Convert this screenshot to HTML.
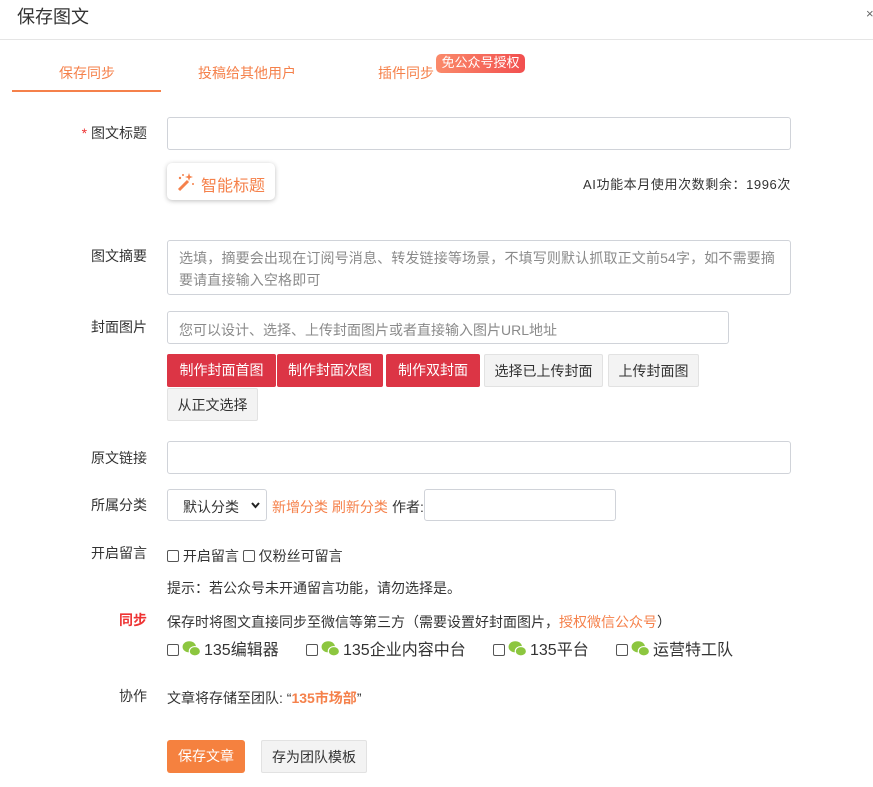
<!DOCTYPE html>
<html><head><meta charset="utf-8"><style>
*{box-sizing:border-box;margin:0;padding:0}
body{width:873px;height:787px;background:#fff;font-family:"Liberation Sans","Noto Sans CJK SC",sans-serif;color:#333;font-size:14px;position:relative;overflow:hidden}
.a{position:absolute;white-space:nowrap}
.lbl{position:absolute;right:726px;font-size:14px;color:#333;line-height:16px}
.inp{position:absolute;border:1px solid #d0d3d9;border-radius:3px;background:#fff}
.ph{color:#8a8a8a;font-size:14px;position:absolute;left:11px}
.btn{position:absolute;height:33px;line-height:33px;text-align:center;font-size:14px;border-radius:2px}
.red{background:#dc3545;color:#fff}
.gr{background:#f3f3f3;color:#333;border:1px solid #e2e2e2}
.or{color:#f5814b}
.cb{display:inline-block;width:12px;height:12px;border:1px solid #555;border-radius:2px;vertical-align:-1px;background:#fff}
.wx{display:inline-block;width:19px;height:17px;vertical-align:-2px;margin:0 3px}
</style></head><body>
<div class="a" style="left:17px;top:3px;font-size:18px;color:#333">保存图文</div>
<div class="a" style="left:866px;top:6px;font-size:13px;color:#666">×</div>
<div class="a" style="left:0;top:39px;width:873px;height:1px;background:#e5e5e5"></div>
<div class="a or" style="left:59px;top:63px;font-size:14px">保存同步</div>
<div class="a or" style="left:198px;top:63px;font-size:14px">投稿给其他用户</div>
<div class="a or" style="left:378px;top:63px;font-size:14px">插件同步</div>
<div class="a" style="left:436px;top:54px;width:89px;height:19px;border-radius:5px;background:linear-gradient(90deg,#fa8a6a,#f24f4f);color:#fff;font-size:13px;line-height:18px;text-align:center">免公众号授权</div>
<div class="a" style="left:12px;top:90px;width:149px;height:2px;background:#f5814b"></div>

<div class="lbl" style="top:125px"><span style="color:#e33">*</span> 图文标题</div>
<div class="inp" style="left:167px;top:117px;width:624px;height:33px"></div>
<div class="a" style="left:167px;top:163px;width:108px;height:37px;border-radius:5px;box-shadow:0 1px 5px rgba(0,0,0,.25);background:#fff"></div>
<svg class="a" style="left:176px;top:172px" width="20" height="20" viewBox="0 0 20 20"><path d="M3 18 L12 9" stroke="#f5814b" stroke-width="3"/><path d="M13 1l1 3 3 1-3 1-1 3-1-3-3-1 3-1z" fill="#f5814b"/><circle cx="4" cy="6" r="1.2" fill="#f5814b"/><circle cx="7" cy="3" r="1" fill="#f5814b"/><circle cx="17" cy="12" r="1" fill="#f5814b"/></svg>
<div class="a or" style="left:201px;top:172px;font-size:16px">智能标题</div>
<div class="a" style="right:82px;top:174px;font-size:13px;letter-spacing:.6px">AI功能本月使用次数剩余：1996次</div>

<div class="lbl" style="top:248px">图文摘要</div>
<div class="inp" style="left:167px;top:240px;width:624px;height:55px"><div class="ph" style="top:6px;line-height:22px;white-space:normal;width:604px;letter-spacing:.15px">选填，摘要会出现在订阅号消息、转发链接等场景，不填写则默认抓取正文前54字，如不需要摘要请直接输入空格即可</div></div>
<div class="lbl" style="top:319px">封面图片</div>
<div class="inp" style="left:167px;top:311px;width:562px;height:33px"><div class="ph" style="top:8px">您可以设计、选择、上传封面图片或者直接输入图片URL地址</div></div>
<div class="btn red" style="left:167px;top:354px;width:109px">制作封面首图</div>
<div class="btn red" style="left:277px;top:354px;width:106px">制作封面次图</div>
<div class="btn red" style="left:386px;top:354px;width:94px">制作双封面</div>
<div class="btn gr" style="left:484px;top:354px;width:119px">选择已上传封面</div>
<div class="btn gr" style="left:608px;top:354px;width:91px">上传封面图</div>
<div class="btn gr" style="left:167px;top:388px;width:91px">从正文选择</div>

<div class="lbl" style="top:450px">原文链接</div>
<div class="inp" style="left:167px;top:441px;width:624px;height:33px"></div>
<div class="lbl" style="top:497px">所属分类</div>
<div class="inp" style="left:167px;top:489px;width:100px;height:32px"><div class="a" style="left:15px;top:7px">默认分类</div><svg class="a" style="left:83px;top:12px" width="9" height="7" viewBox="0 0 9 7"><path d="M1 1l3.5 4L8 1" stroke="#222" stroke-width="2" fill="none"/></svg></div>
<div class="a or" style="left:272px;top:497px">新增分类 刷新分类</div>
<div class="a" style="left:392px;top:497px">作者:</div>
<div class="inp" style="left:424px;top:489px;width:192px;height:32px"></div>

<div class="lbl" style="top:545px">开启留言</div>
<div class="a" style="left:167px;top:546px"><span class="cb"></span> 开启留言 <span class="cb"></span> 仅粉丝可留言</div>
<div class="a" style="left:167px;top:578px">提示：若公众号未开通留言功能，请勿选择是。</div>

<div class="lbl" style="top:612px;color:#e33;font-weight:bold">同步</div>
<div class="a" style="left:167px;top:612px">保存时将图文直接同步至微信等第三方（需要设置好封面图片，<span class="or">授权微信公众号</span>）</div>
<svg width="0" height="0" style="position:absolute"><defs><g id="w"><ellipse cx="6.5" cy="6" rx="6" ry="5" fill="#8cc63f"/><ellipse cx="11.5" cy="10" rx="5" ry="4.2" fill="#8cc63f" stroke="#fff" stroke-width="1"/></g></defs></svg>
<div class="a" style="left:167px;top:636px;font-size:16px"><span class="cb"></span><svg class="wx" viewBox="0 0 17 15"><use href="#w"/></svg>135编辑器</div>
<div class="a" style="left:306px;top:636px;font-size:16px"><span class="cb"></span><svg class="wx" viewBox="0 0 17 15"><use href="#w"/></svg>135企业内容中台</div>
<div class="a" style="left:493px;top:636px;font-size:16px"><span class="cb"></span><svg class="wx" viewBox="0 0 17 15"><use href="#w"/></svg>135平台</div>
<div class="a" style="left:616px;top:636px;font-size:16px"><span class="cb"></span><svg class="wx" viewBox="0 0 17 15"><use href="#w"/></svg>运营特工队</div>

<div class="lbl" style="top:688px">协作</div>
<div class="a" style="left:167px;top:688px">文章将存储至团队: “<b class="or">135市场部</b>”</div>

<div class="btn" style="left:167px;top:740px;width:78px;background:#f5813f;color:#fff;font-size:14px;border-radius:3px">保存文章</div>
<div class="btn gr" style="left:261px;top:740px;width:106px">存为团队模板</div>
</body></html>
